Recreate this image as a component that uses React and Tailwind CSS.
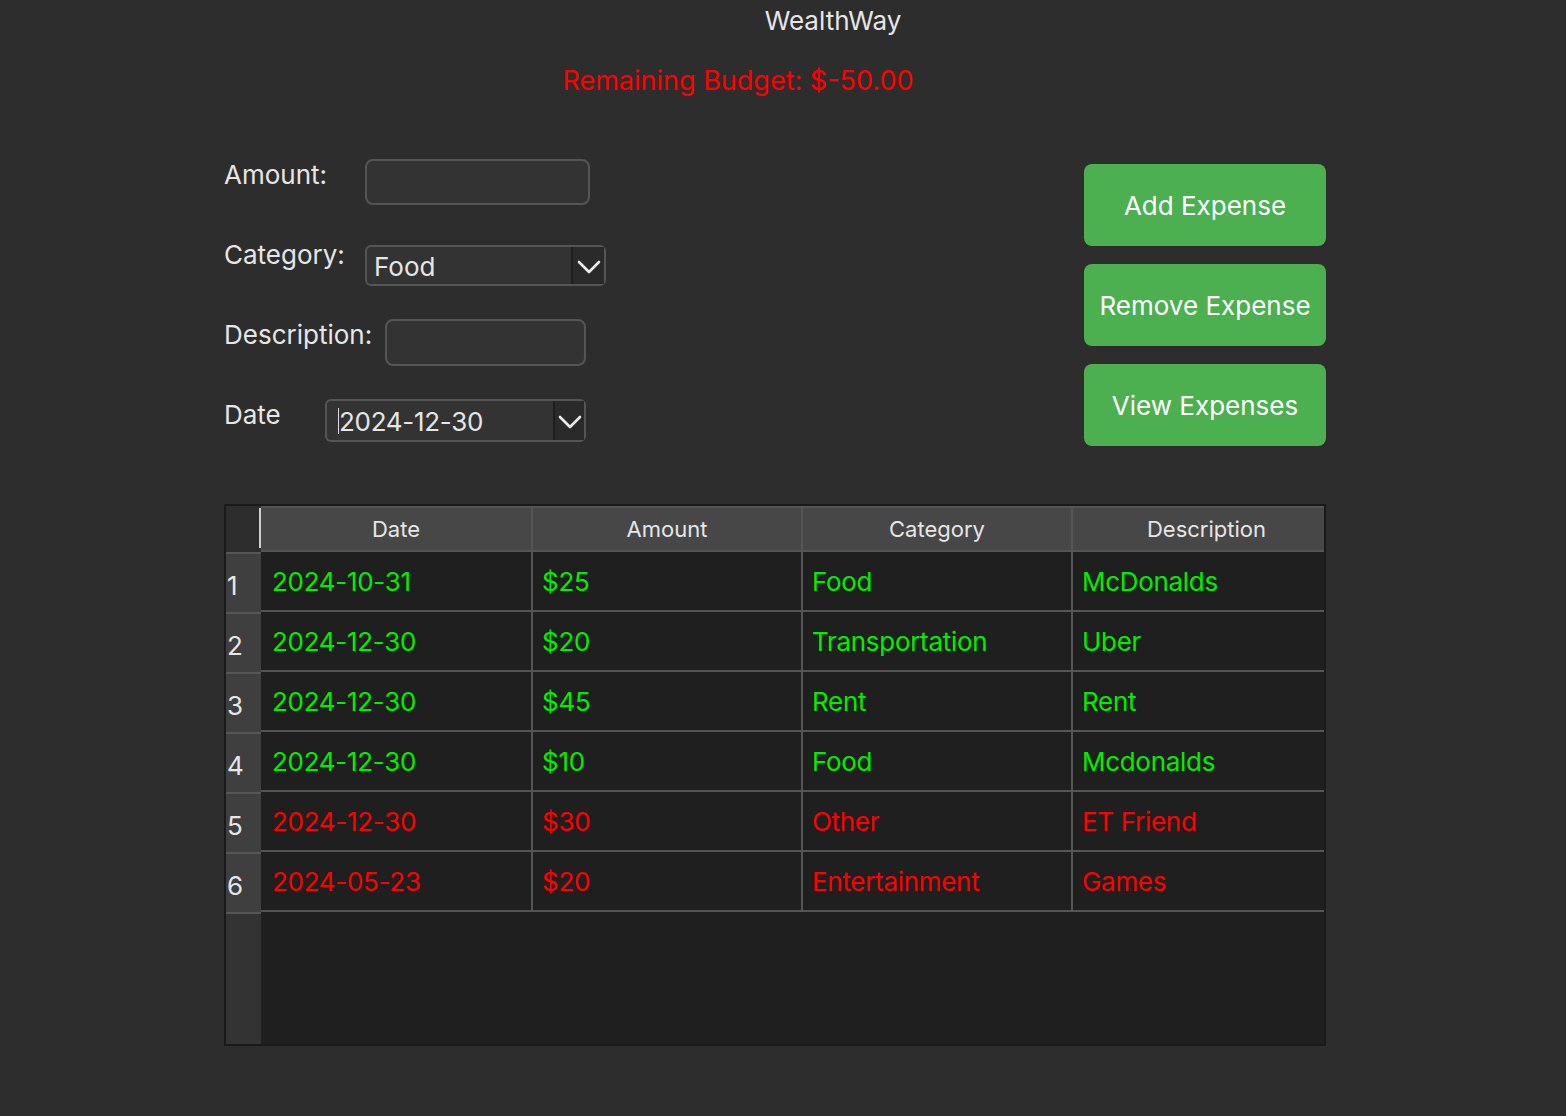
import React from 'react';

const expenses = [
  { date: '2024-10-31', amount: '$25', category: 'Food', description: 'McDonalds', over: false },
  { date: '2024-12-30', amount: '$20', category: 'Transportation', description: 'Uber', over: false },
  { date: '2024-12-30', amount: '$45', category: 'Rent', description: 'Rent', over: false },
  { date: '2024-12-30', amount: '$10', category: 'Food', description: 'Mcdonalds', over: false },
  { date: '2024-12-30', amount: '$30', category: 'Other', description: 'ET Friend', over: true },
  { date: '2024-05-23', amount: '$20', category: 'Entertainment', description: 'Games', over: true },
];

const Chevron = () => (
  <svg width="24" height="16" viewBox="0 0 24 16" fill="none">
    <path d="M2 4l10 10 10-10" stroke="#ececec" strokeWidth="2.6" strokeLinecap="round" strokeLinejoin="round" />
  </svg>
);

const ActionButton = ({ children }) => (
  <button
    type="button"
    className="h-[82px] w-[242px] rounded-lg bg-[#4caf50] text-[26px] text-white"
  >
    {children}
  </button>
);

const App = () => {
  return (
    <div
      className="min-h-[1116px] w-full bg-[#2d2d2d] text-[#e6e6e6]"
      style={{ fontFamily: 'Inter, "Noto Sans", sans-serif' }}
    >
      <div className="pl-[100px] pt-[4px] text-center text-[26px] leading-[34px] text-[#e6e6e6]">
        WealthWay
      </div>
      <div className="mt-[26px] pr-[90px] text-center text-[27px] leading-[34px] text-[#ff0000]">
        Remaining Budget: $-50.00
      </div>

      <div className="ml-[224px] w-[1102px]">
        <div className="mt-[61px] flex justify-between">
          {/* form */}
          <div className="flex flex-col text-[26px] leading-[32px]">
            <div className="flex h-[80px] items-start">
              <span className="w-[141px]">Amount:</span>
              <div className="h-[46px] w-[225px] rounded-lg border-2 border-[#555] bg-[#333]" />
            </div>
            <div className="flex h-[80px] items-start">
              <span className="w-[141px]">Category:</span>
              <div className="mt-[6px] flex h-[41px] w-[241px] items-center rounded-md border-2 border-[#555] bg-[#333]">
                <span className="flex-1 pl-[7px] pt-[2px]">Food</span>
                <span className="flex h-full w-[33px] items-center justify-center border-l-2 border-[#1f1f1f] bg-[#2a2a2a]">
                  <Chevron />
                </span>
              </div>
            </div>
            <div className="flex h-[80px] items-start">
              <span className="w-[161px]">Description:</span>
              <div className="h-[47px] w-[201px] rounded-lg border-2 border-[#555] bg-[#333]" />
            </div>
            <div className="flex h-[80px] items-start">
              <span className="w-[101px]">Date</span>
              <div className="flex h-[43px] w-[261px] items-center rounded-md border-2 border-[#555] bg-[#333]">
                <span className="ml-[11px] h-[26px] w-[1px] bg-[#ddd]" />
                <span className="flex-1 pt-[2px] tracking-[-0.3px]">2024-12-30</span>
                <span className="flex h-full w-[31px] items-center justify-center border-l-2 border-[#1f1f1f] bg-[#2a2a2a]">
                  <Chevron />
                </span>
              </div>
            </div>
          </div>

          {/* actions */}
          <div className="mt-[5px] flex flex-col gap-[18px]">
            <ActionButton>Add Expense</ActionButton>
            <ActionButton>Remove Expense</ActionButton>
            <ActionButton>View Expenses</ActionButton>
          </div>
        </div>

        {/* table */}
        <div className="mt-[25px] h-[542px] border-2 border-[#1a1a1a] bg-[#1f1f1f]">
          <div className="flex h-full">
            <div className="flex w-[35px] flex-col bg-[#333]">
              <div className="flex h-[46px] justify-end bg-[#2d2d2d]">
                <span className="mt-[2px] h-[40px] w-[2px] bg-[#cfcfcf]" />
              </div>
              {expenses.map((e, i) => (
                <div
                  key={i}
                  className="flex h-[60px] items-center border-t-2 border-[#555] bg-[#3f3f3f] pl-[1px] pt-[4px] text-[26px] text-[#e6e6e6]"
                >
                  {i + 1}
                </div>
              ))}
              <div className="flex-1 border-t-2 border-[#555] bg-[#333]" />
            </div>
            <div className="flex flex-1 flex-col">
              <div className="grid h-[46px] grid-cols-[270px_270px_270px_1fr] bg-[#555] text-[22px] text-[#e6e6e6]">
                {['Date', 'Amount', 'Category', 'Description'].map((h, i) => (
                  <div
                    key={h}
                    className={`my-[2px] flex items-center justify-center bg-[#474747] ${i > 0 ? 'ml-[2px]' : ''} ${
                      i === 3 ? 'pl-[16px]' : ''
                    }`}
                  >
                    {h}
                  </div>
                ))}
              </div>
              {expenses.map((e, i) => (
                <div
                  key={i}
                  className={`grid h-[60px] grid-cols-[270px_270px_270px_1fr] border-b-2 border-[#555] text-[26px] tracking-[-0.3px] ${
                    e.over ? 'text-[#ff0000]' : 'text-[#00ee00]'
                  }`}
                >
                  <div className="flex items-center pl-[11px]">{e.date}</div>
                  <div className="flex items-center border-l-2 border-[#555] pl-[9px]">{e.amount}</div>
                  <div className="flex items-center border-l-2 border-[#555] pl-[9px]">{e.category}</div>
                  <div className="flex items-center border-l-2 border-[#555] pl-[9px]">{e.description}</div>
                </div>
              ))}
            </div>
          </div>
        </div>
      </div>
    </div>
  );
};

export default App;
